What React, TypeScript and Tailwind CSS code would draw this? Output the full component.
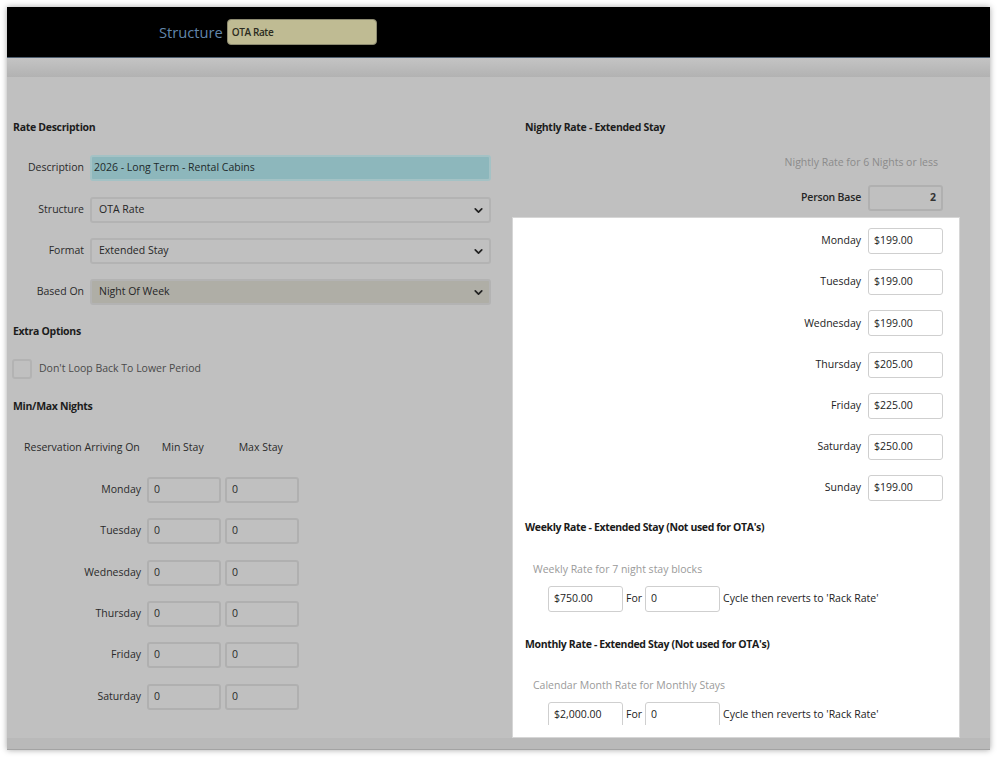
import React from "react";
import { ChevronDown } from "lucide-react";

const font = { fontFamily: '"Open Sans", "Noto Sans", sans-serif' };

function DimSelect({ value, bg }: { value: string; bg: string }) {
  return (
    <div
      className={`flex h-[26px] w-[401px] items-center justify-between rounded-[3px] border-2 border-[#b3b3b3] pl-[7px] pr-[4px] text-[10.5px] text-[#262626] ${bg}`}
    >
      <span>{value}</span>
      <ChevronDown size={13} strokeWidth={3.2} className="text-[#222]" />
    </div>
  );
}

function DimRow({ label, children }: { label: string; children: React.ReactNode }) {
  return (
    <div className="flex h-[26px] items-center">
      <div className="w-[71px] text-right text-[10.5px] text-[#2a2a2a]">{label}</div>
      <div className="ml-[6px]">{children}</div>
    </div>
  );
}

function DimSmallInput({ value }: { value: string }) {
  return (
    <div className="flex h-[26px] w-[74px] items-center rounded-[3px] border-2 border-[#b0b0b0] pl-[5px] text-[10.5px] text-[#2a2a2a]">
      {value}
    </div>
  );
}

function WhiteInput({ value, w = "w-[75px]" }: { value: string; w?: string }) {
  return (
    <div
      className={`flex h-[26px] ${w} items-center rounded-[3px] border border-[#cfcfcf] bg-white pl-[5px] text-[10.5px] text-[#222]`}
    >
      {value}
    </div>
  );
}

const days = ["Monday", "Tuesday", "Wednesday", "Thursday", "Friday", "Saturday", "Sunday"];
const leftDays = ["Monday", "Tuesday", "Wednesday", "Thursday", "Friday", "Saturday"];
const rates = ["$199.00", "$199.00", "$199.00", "$205.00", "$225.00", "$250.00", "$199.00"];

export default function App() {
  return (
    <div className="min-h-screen bg-white" style={font}>
      <div className="ml-[7px] pt-[7px]">
        <div className="flex h-[743px] w-[983px] flex-col overflow-hidden shadow-[0_0_6px_rgba(0,0,0,0.35)]">
          {/* Header */}
          <div className="flex h-[51px] shrink-0 items-center border-b border-[#4f5f70] bg-black pl-[152px]">
            <span className="text-[14.7px] leading-none text-[#6286ab]">Structure</span>
            <div className="ml-[4px] flex h-[26px] w-[150px] items-center rounded-[4px] border border-[#8c8a70] bg-[#bfbb93] pl-[4px] text-[10px] font-semibold tracking-[-0.4px] text-[#2b2b20]">
              OTA Rate
            </div>
          </div>
          {/* Toolbar strip */}
          <div className="h-[19px] shrink-0 bg-gradient-to-b from-[#c4c4c4] to-[#b2b2b2]" />
          {/* Body */}
          <div className="relative h-[661px] shrink-0 bg-[#c0c0c0]">
            {/* Spotlight panel */}
            <div className="absolute left-[505px] top-[140px] h-[521px] w-[448px] border border-[#d6d6d6] bg-white" />
            <div className="relative z-10 flex h-[648px] overflow-hidden pl-[6px]">
              {/* Left column */}
              <div className="flex w-[478px] flex-col">
                <div className="mt-[42px] h-[16px] text-[10.5px] font-bold leading-[16px] tracking-[-0.3px] text-[#1c1c1c]">
                  Rate Description
                </div>
                <div className="mt-[20px]">
                  <DimRow label="Description">
                    <div className="flex h-[26px] w-[401px] items-center rounded-[3px] border-2 border-[#a4c2c5] bg-[#8db7bc] pl-[2px] text-[10.5px] text-[#1e2a2b]">
                      2026 - Long Term - Rental Cabins
                    </div>
                  </DimRow>
                </div>
                <div className="mt-[16px]">
                  <DimRow label="Structure">
                    <DimSelect value="OTA Rate" bg="bg-[#c0c0c0]" />
                  </DimRow>
                </div>
                <div className="mt-[15px]">
                  <DimRow label="Format">
                    <DimSelect value="Extended Stay" bg="bg-[#c0c0c0]" />
                  </DimRow>
                </div>
                <div className="mt-[15px]">
                  <DimRow label="Based On">
                    <DimSelect value="Night Of Week" bg="bg-[#afaea6]" />
                  </DimRow>
                </div>
                <div className="mt-[18px] h-[16px] text-[10.5px] font-bold leading-[16px] tracking-[-0.3px] text-[#1c1c1c]">
                  Extra Options
                </div>
                <div className="mt-[20px] flex h-[20px] items-center">
                  <div className="-ml-[1px] h-[20px] w-[20px] rounded-[3px] border-2 border-[#b3b3b3]" />
                  <span className="ml-[7px] text-[10.5px] text-[#4a4a4a]">Don't Loop Back To Lower Period</span>
                </div>
                <div className="mt-[19px] h-[16px] text-[10.5px] font-bold leading-[16px] tracking-[-0.3px] text-[#1c1c1c]">
                  Min/Max Nights
                </div>
                <div className="mt-[26px] flex h-[16px] items-center text-[10.5px] text-[#2a2a2a]">
                  <span className="ml-[11px]">Reservation Arriving On</span>
                  <span className="ml-[22px]">Min Stay</span>
                  <span className="ml-[35px]">Max Stay</span>
                </div>
                <div className="mt-[21px] flex flex-col gap-[15.4px]">
                  {leftDays.map((d) => (
                    <div key={d} className="flex h-[26px] items-center">
                      <div className="w-[128px] text-right text-[10.5px] text-[#2a2a2a]">{d}</div>
                      <div className="ml-[6px] flex gap-[4px]">
                        <DimSmallInput value="0" />
                        <DimSmallInput value="0" />
                      </div>
                    </div>
                  ))}
                  <div className="flex h-[26px] items-center">
                    <div className="w-[128px]" />
                    <div className="ml-[6px] flex gap-[4px]">
                      <DimSmallInput value="" />
                      <DimSmallInput value="" />
                    </div>
                  </div>
                </div>
              </div>
              {/* Right column */}
              <div className="ml-[34px] flex w-[418px] flex-col">
                <div className="mt-[42px] h-[16px] text-[10.5px] font-bold leading-[16px] tracking-[-0.3px] text-[#1c1c1c]">
                  Nightly Rate - Extended Stay
                </div>
                <div className="mt-[19px] h-[16px] pr-[5px] text-right text-[10.5px] leading-[16px] text-[#8b8b8b]">
                  Nightly Rate for 6 Nights or less
                </div>
                <div className="mt-[15px] flex h-[26px] items-center justify-end">
                  <span className="text-[10.5px] font-semibold tracking-[-0.2px] text-[#262626]">Person Base</span>
                  <div className="ml-[7px] flex h-[26px] w-[75px] items-center justify-end rounded-[3px] border-2 border-[#b0b0b0] pr-[5px] text-[10.5px] font-bold text-[#333]">
                    2
                  </div>
                </div>
                <div className="mt-[17px] flex flex-col gap-[15.2px]">
                  {days.map((d, i) => (
                    <div key={d} className="flex h-[26px] items-center justify-end">
                      <span className="text-[10.5px] text-[#222]">{d}</span>
                      <div className="ml-[7px]">
                        <WhiteInput value={rates[i]} />
                      </div>
                    </div>
                  ))}
                </div>
                <div className="mt-[18px] h-[16px] text-[10.5px] font-bold leading-[16px] tracking-[-0.35px] text-[#1a1a1a]">
                  Weekly Rate - Extended Stay (Not used for OTA's)
                </div>
                <div className="mt-[26px] h-[16px] pl-[8px] text-[10.5px] leading-[16px] text-[#9a9a9a]">
                  Weekly Rate for 7 night stay blocks
                </div>
                <div className="mt-[9px] flex h-[26px] items-center pl-[23px] text-[10.5px] text-[#222]">
                  <WhiteInput value="$750.00" />
                  <span className="ml-[3px]">For</span>
                  <div className="ml-[3px]">
                    <WhiteInput value="0" />
                  </div>
                  <span className="ml-[3px]">Cycle then reverts to 'Rack Rate'</span>
                </div>
                <div className="mt-[24px] h-[16px] text-[10.5px] font-bold leading-[16px] tracking-[-0.35px] text-[#1a1a1a]">
                  Monthly Rate - Extended Stay (Not used for OTA's)
                </div>
                <div className="mt-[25px] h-[16px] pl-[8px] text-[10.5px] leading-[16px] text-[#9a9a9a]">
                  Calendar Month Rate for Monthly Stays
                </div>
                <div className="mt-[9px] flex h-[26px] items-center pl-[23px] text-[10.5px] text-[#222]">
                  <WhiteInput value="$2,000.00" />
                  <span className="ml-[3px]">For</span>
                  <div className="ml-[3px]">
                    <WhiteInput value="0" />
                  </div>
                  <span className="ml-[3px]">Cycle then reverts to 'Rack Rate'</span>
                </div>
              </div>
            </div>
          </div>
          {/* Footer strip */}
          <div className="h-[12px] shrink-0 border-b border-[#a3a3a3] bg-[#b9b9b9]" />
        </div>
      </div>
    </div>
  );
}
